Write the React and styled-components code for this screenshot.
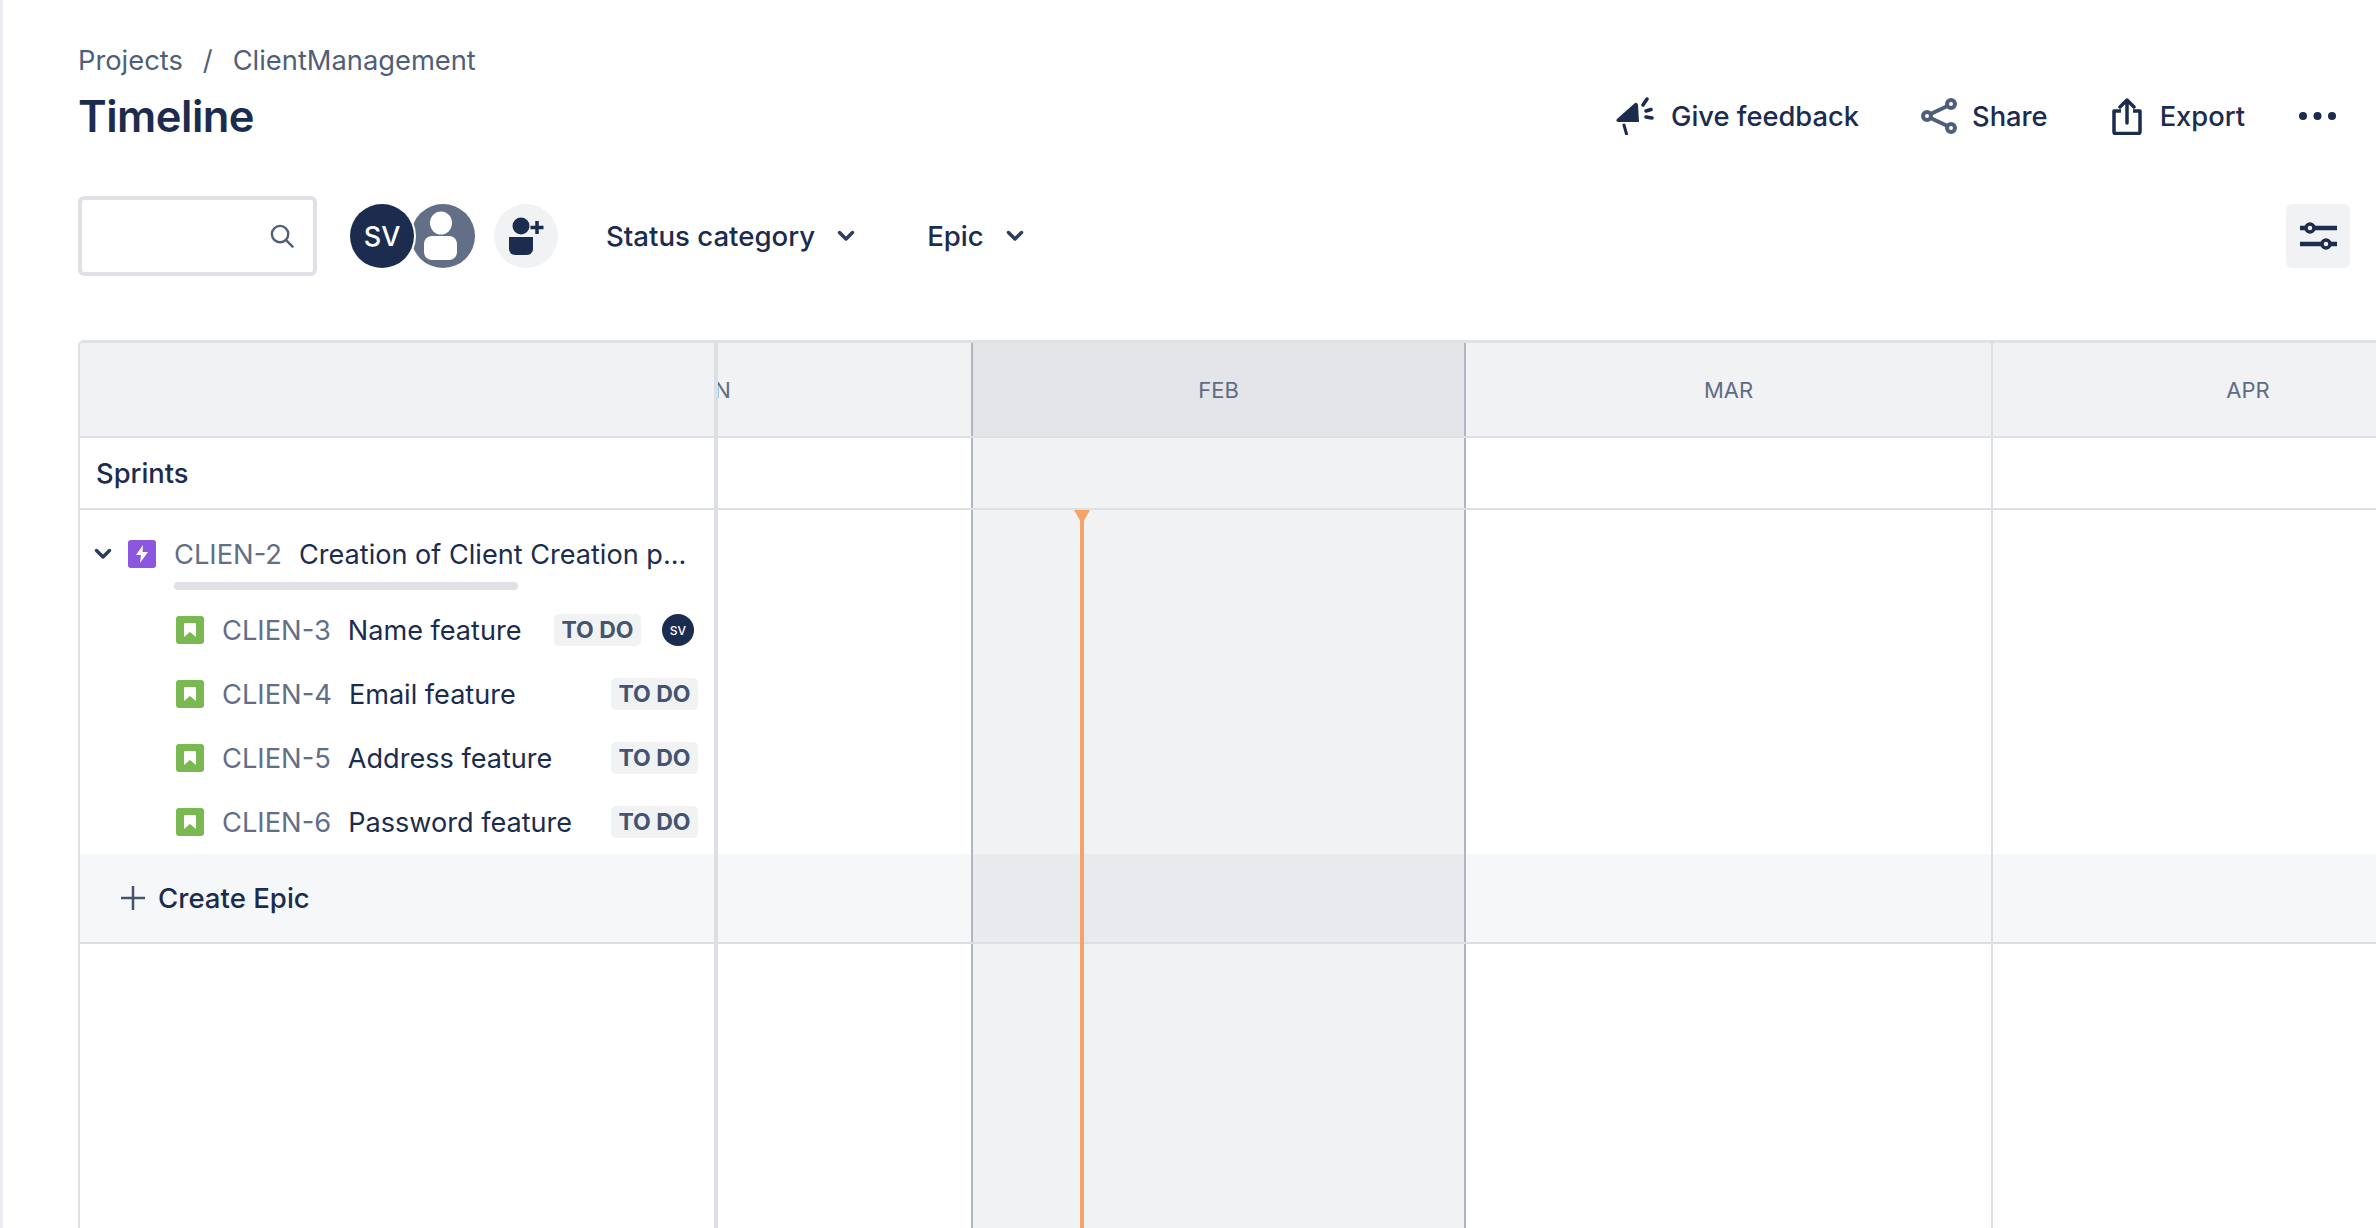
import React from 'react'
import styled, { createGlobalStyle } from 'styled-components'

const GlobalStyle = createGlobalStyle`
  html, body { margin: 0; padding: 0; height: 100%; background: #fff; }
  body { font-family: Inter, "Noto Sans", sans-serif; color: #172b4d; overflow: hidden; }
  #root { height: 100%; }
`

const navy = '#1b2c4e'
const columns = '638px 255px 493px 527px 512px'

const Page = styled.div`
  box-sizing: border-box;
  height: 1228px;
  border-left: 3px solid #ebecf0;
  padding: 42px 26px 0 75px;
  display: flex;
  flex-direction: column;
  overflow: hidden;
`
const Breadcrumbs = styled.div`
  display: flex;
  align-items: center;
  gap: 20px;
  height: 36px;
  font-size: 27.3px;
  color: #505f79;
`
const TitleRow = styled.div`
  display: flex;
  align-items: center;
  justify-content: space-between;
  height: 44px;
  margin-top: 16px;
`
const Title = styled.h1`
  margin: 0;
  font-size: 43.500px;
  font-weight: 600;
  letter-spacing: -0.5px;
  color: ${navy};
`
const Actions = styled.div`
  display: flex;
  align-items: center;
  padding-right: 14px;
`
const Action = styled.div`
  display: flex;
  align-items: center;
  gap: ${(p) => p.$gap || 15}px;
  margin-left: ${(p) => p.$left || 0}px;
  font-size: 27.3px;
  font-weight: 500;
  color: ${navy};
`
const Toolbar = styled.div`
  display: flex;
  align-items: center;
  height: 80px;
  margin-top: 58px;
`
const SearchBox = styled.div`
  box-sizing: border-box;
  width: 239px;
  height: 80px;
  border: 4px solid #dfe1e6;
  border-radius: 6px;
  display: flex;
  align-items: center;
  justify-content: flex-end;
  padding-right: 19px;
`
const Avatars = styled.div`
  display: flex;
  margin-left: 33px;
`
const Avatar = styled.div`
  position: relative;
  z-index: ${(p) => (p.$front ? 1 : 0)};
  width: 64px;
  height: 64px;
  margin-left: ${(p) => (p.$front ? 0 : -3)}px;
  border-radius: 50%;
  background: ${(p) => (p.$front ? navy : '#626f86')};
  box-shadow: ${(p) => (p.$front ? '0 0 0 2px #fff' : 'none')};
  color: #fff;
  font-size: 27px;
  font-weight: 500;
  display: flex;
  align-items: center;
  justify-content: center;
  overflow: hidden;
`
const AddPeople = styled.div`
  width: 64px;
  height: 64px;
  margin-left: 19px;
  border-radius: 50%;
  background: #f1f2f4;
  display: flex;
  align-items: center;
  justify-content: center;
`
const Filter = styled.div`
  display: flex;
  align-items: center;
  gap: 22px;
  margin-left: ${(p) => p.$left}px;
  font-size: 27.6px;
  font-weight: 500;
  color: ${navy};
`
const SettingsButton = styled.div`
  width: 64px;
  height: 64px;
  margin-left: auto;
  border-radius: 6px;
  background: #f1f2f4;
  display: flex;
  align-items: center;
  justify-content: center;
`
const Gantt = styled.div`
  position: relative;
  flex: 1;
  margin: 64px -26px 0 0;
  border-top: 3px solid #dfe1e6;
  border-left: 2px solid #dfe1e6;
  border-top-left-radius: 6px;
  display: flex;
  flex-direction: column;
  overflow: hidden;
`
const Row = styled.div`
  display: grid;
  grid-template-columns: ${columns};
  height: ${(p) => p.$height}px;
  flex: ${(p) => (p.$grow ? 1 : 'none')};
  box-sizing: border-box;
  border-bottom: ${(p) => (p.$noLine ? 'none' : '2px solid #dcdfe4')};
  background: ${(p) => p.$bg || 'transparent'};
`
const Cell = styled.div`
  box-sizing: border-box;
  min-width: 0;
  overflow: hidden;
  display: flex;
  align-items: center;
  justify-content: center;
  font-size: 22px;
  color: #5e6c84;
  background: ${(p) => p.$bg || 'transparent'};
  border-right: 2px solid ${(p) => p.$line || '#dcdfe4'};
`
const Panel = styled.div`
  box-sizing: border-box;
  min-width: 0;
  border-right: 4px solid #dcdfe4;
  display: flex;
  flex-direction: ${(p) => (p.$col ? 'column' : 'row')};
  align-items: ${(p) => (p.$col ? 'stretch' : 'center')};
`
const ClippedMonth = styled.span`
  margin-right: auto;
  margin-left: -31px;
`
const SprintsLabel = styled.div`
  padding-left: 16px;
  font-size: 27.3px;
  font-weight: 500;
  color: ${navy};
`
const EpicRow = styled.div`
  display: flex;
  align-items: center;
  height: 32px;
  margin-top: 28px;
  padding-left: 14px;
`
const Chevron = styled.svg`
  width: 18px;
  height: 12px;
  flex: none;
`
const IssueIcon = styled.div`
  width: 28px;
  height: 28px;
  flex: none;
  margin-left: ${(p) => p.$left || 0}px;
  border-radius: 3px;
  background: ${(p) => p.$bg};
  display: flex;
  align-items: center;
  justify-content: center;
`
const Key = styled.span`
  margin-left: 18px;
  font-size: 27.3px;
  color: #626f86;
  white-space: nowrap;
`
const Summary = styled.span`
  margin-left: 17px;
  font-size: 27.100px;
  color: ${navy};
  white-space: nowrap;
`
const Progress = styled.div`
  width: 344px;
  height: 8px;
  margin: 12px 0 0 94px;
  border-radius: 4px;
  background: #dfe1e6;
`
const Stories = styled.div`
  display: flex;
  flex-direction: column;
  gap: 32px;
  margin-top: 24px;
  padding-left: 96px;
  padding-right: 16px;
`
const StoryRow = styled.div`
  display: flex;
  align-items: center;
  height: 32px;
`
const Lozenge = styled.span`
  margin-left: auto;
  height: 32px;
  width: 87px;
  border-radius: 5px;
  background: #f1f2f4;
  color: #44546f;
  font-size: 23px;
  font-weight: 700;
  display: flex;
  align-items: center;
  justify-content: center;
  white-space: nowrap;
`
const TinyAvatar = styled.div`
  width: 32px;
  height: 32px;
  margin-left: 21px;
  margin-right: 4px;
  border-radius: 50%;
  background: ${navy};
  color: #fff;
  font-size: 12px;
  font-weight: 500;
  flex: none;
  display: flex;
  align-items: center;
  justify-content: center;
`
const CreateEpic = styled.div`
  display: flex;
  align-items: center;
  gap: 13px;
  padding-left: 41px;
  font-size: 27.6px;
  font-weight: 500;
  color: ${navy};
`
const TodayMarker = styled.div`
  position: absolute;
  top: 167px;
  bottom: 0;
  left: 1000px;
  width: 4px;
  background: #f4a36a;
  &::before {
    content: '';
    position: absolute;
    top: 0;
    left: -6px;
    border-left: 8px solid transparent;
    border-right: 8px solid transparent;
    border-top: 14px solid #f4a36a;
  }
`

const stories = [
  { key: 'CLIEN-3', name: 'Name feature', assigned: true },
  { key: 'CLIEN-4', name: 'Email feature' },
  { key: 'CLIEN-5', name: 'Address feature' },
  { key: 'CLIEN-6', name: 'Password feature' },
]

const ChevronDown = () => (
  <Chevron viewBox="0 0 18 12" fill="none">
    <path d="M2.500 2.500L9 9l6.500-6.500" stroke="#2c3e5d" strokeWidth="3.500" strokeLinecap="round" strokeLinejoin="round" />
  </Chevron>
)

const Bookmark = () => (
  <svg width="14" height="16" viewBox="0 0 14 16">
    <path d="M1 2a1 1 0 0 1 1-1h10a1 1 0 0 1 1 1v13l-6-5-6 5z" fill="#fff" />
  </svg>
)

const Megaphone = () => (
  <svg width="40" height="38" viewBox="0 0 40 38" fill={navy}>
    <path d="M1 22 L19 6 Q21 5 22 8 L23 25 H4 Q-1 25 1 22Z" />
    <path d="M8 28l2.500 9" stroke={navy} strokeWidth="3" strokeLinecap="round" />
    <path d="M27 8l4-6M30 14l5-1.500M30 20l6 1" stroke={navy} strokeWidth="3.500" strokeLinecap="round" />
  </svg>
)

const ShareIcon = () => (
  <svg width="36" height="36" viewBox="0 0 36 36" fill="none" stroke="#505f79" strokeWidth="4">
    <circle cx="30" cy="6" r="4" />
    <circle cx="6" cy="18" r="4" />
    <circle cx="30" cy="30" r="4" />
    <path d="M9.500 16L26.500 8M9.500 20l17 8" />
  </svg>
)

const ExportIcon = () => (
  <svg width="30" height="37" viewBox="0 0 30 37" fill="none" stroke={navy} strokeWidth="3.500" strokeLinejoin="round">
    <path d="M9 13H2v21a1.500 1.500 0 0 0 1.500 1.500h23A1.500 1.500 0 0 0 28 34V13h-7" />
    <path d="M15 25V3M8 9l7-7 7 7" strokeLinecap="round" />
  </svg>
)

const Dots = () => (
  <svg width="37" height="10" viewBox="0 0 37 10" fill={navy}>
    <circle cx="4" cy="5" r="4" />
    <circle cx="18.500" cy="5" r="4" />
    <circle cx="33" cy="5" r="4" />
  </svg>
)

const SearchIcon = () => (
  <svg width="24" height="24" viewBox="0 0 25 25" fill="none" stroke="#505f79" strokeWidth="2.500">
    <circle cx="10.500" cy="10.500" r="8.500" />
    <path d="M17 17l6.500 6.500" strokeLinecap="round" />
  </svg>
)

const PersonIcon = () => (
  <svg width="64" height="64" viewBox="0 0 64 64" fill="#fff">
    <ellipse cx="30" cy="19" rx="11" ry="11.500" />
    <rect x="13" y="32" width="33" height="24" rx="8" />
  </svg>
)

const AddPersonIcon = () => (
  <svg width="36" height="38" viewBox="0 0 36 38" fill={navy}>
    <circle cx="13" cy="9" r="8.500" />
    <path d="M1 20h24v12a6 6 0 0 1-6 6H7a6 6 0 0 1-6-6z" />
    <path d="M29 4v13M22.500 10.500h13" stroke={navy} strokeWidth="3.500" />
  </svg>
)

const SlidersIcon = () => (
  <svg width="37" height="28" viewBox="0 0 37 28" fill="#f1f2f4" stroke={navy} strokeWidth="3.500">
    <path d="M0 6h37M0 22h37" strokeWidth="4.500" />
    <circle cx="10" cy="6" r="4" />
    <circle cx="26" cy="22" r="4" />
  </svg>
)

const PlusIcon = () => (
  <svg width="24" height="24" viewBox="0 0 24 24" stroke="#44546f" strokeWidth="2.500">
    <path d="M12 0v24M0 12h24" />
  </svg>
)

export default function App() {
  return (
    <>
      <GlobalStyle />
      <Page>
        <Breadcrumbs>
          <span>Projects</span>
          <span>/</span>
          <span>ClientManagement</span>
        </Breadcrumbs>
        <TitleRow>
          <Title>Timeline</Title>
          <Actions>
            <Action>
              <Megaphone />
              Give feedback
            </Action>
            <Action $left={62}>
              <ShareIcon />
              Share
            </Action>
            <Action $left={64} $gap={18}>
              <ExportIcon />
              Export
            </Action>
            <Action $left={54}>
              <Dots />
            </Action>
          </Actions>
        </TitleRow>
        <Toolbar>
          <SearchBox>
            <SearchIcon />
          </SearchBox>
          <Avatars>
            <Avatar $front>SV</Avatar>
            <Avatar>
              <PersonIcon />
            </Avatar>
          </Avatars>
          <AddPeople>
            <AddPersonIcon />
          </AddPeople>
          <Filter $left={48}>
            Status category
            <ChevronDown />
          </Filter>
          <Filter $left={72}>
            Epic
            <ChevronDown />
          </Filter>
          <SettingsButton>
            <SlidersIcon />
          </SettingsButton>
        </Toolbar>
        <Gantt>
          <Row $height={95} $bg="#f1f2f4">
            <Panel />
            <Cell $line="#b0b5c0">
              <ClippedMonth>JAN</ClippedMonth>
            </Cell>
            <Cell $bg="#e4e5e9" $line="#b0b5c0">FEB</Cell>
            <Cell>MAR</Cell>
            <Cell>APR</Cell>
          </Row>
          <Row $height={72}>
            <Panel>
              <SprintsLabel>Sprints</SprintsLabel>
            </Panel>
            <Cell $line="#b0b5c0" />
            <Cell $bg="#f1f2f4" $line="#b0b5c0" />
            <Cell />
            <Cell />
          </Row>
          <Row $height={344} $noLine>
            <Panel $col>
              <EpicRow>
                <ChevronDown />
                <IssueIcon $bg="#8b57de" $left={16}>
                  <svg width="12" height="18" viewBox="0 0 12 18">
                    <path d="M7 0L0 10h5l-1 8 8-11H6.500z" fill="#fff" />
                  </svg>
                </IssueIcon>
                <Key>CLIEN-2</Key>
                <Summary>Creation of Client Creation p...</Summary>
              </EpicRow>
              <Progress />
              <Stories>
                {stories.map((s) => (
                  <StoryRow key={s.key}>
                    <IssueIcon $bg="#7ab851">
                      <Bookmark />
                    </IssueIcon>
                    <Key>{s.key}</Key>
                    <Summary>{s.name}</Summary>
                    <Lozenge>TO DO</Lozenge>
                    {s.assigned && <TinyAvatar>SV</TinyAvatar>}
                  </StoryRow>
                ))}
              </Stories>
            </Panel>
            <Cell $line="#b0b5c0" />
            <Cell $bg="#f1f2f4" $line="#b0b5c0" />
            <Cell />
            <Cell />
          </Row>
          <Row $height={90} $bg="#f6f7f9">
            <Panel>
              <CreateEpic>
                <PlusIcon />
                Create Epic
              </CreateEpic>
            </Panel>
            <Cell $line="#b0b5c0" />
            <Cell $bg="#e9eaee" $line="#b0b5c0" />
            <Cell />
            <Cell />
          </Row>
          <Row $grow $noLine>
            <Panel />
            <Cell $line="#b0b5c0" />
            <Cell $bg="#f1f2f4" $line="#b0b5c0" />
            <Cell />
            <Cell />
          </Row>
          <TodayMarker />
        </Gantt>
      </Page>
    </>
  )
}
